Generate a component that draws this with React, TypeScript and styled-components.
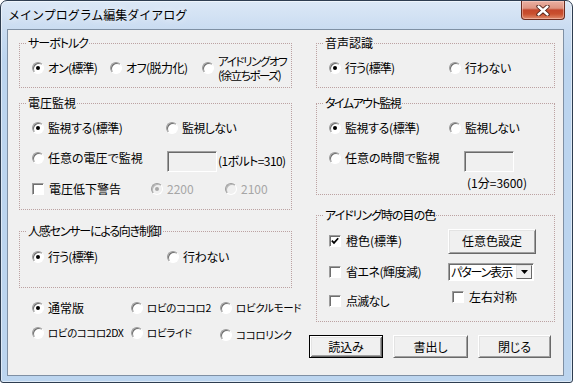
import React from "react";
import styled, { createGlobalStyle } from "styled-components";

const Global = createGlobalStyle`
  html, body { margin: 0; padding: 0; background: #ffffff; }
  body {
    font-family: "Noto Sans CJK JP", "Noto Sans", sans-serif;
    font-size: 12px;
    color: #000;
  }
  * { box-sizing: border-box; }
`;

const Window = styled.div`
  width: 573px;
  height: 383px;
  border: 1px solid #2e3d50;
  border-radius: 7px 7px 3px 3px;
  background: linear-gradient(180deg, #dce8f6 0px, #cadcf1 28px, #bcd5ef 60px, #bcd5ef 100%);
  box-shadow: inset 0 0 0 1px rgba(255, 255, 255, 0.5);
  padding: 0 8px 6px 6px;
  display: flex;
  flex-direction: column;
`;

const TitleBar = styled.div`
  height: 28px;
  flex: none;
  display: flex;
  align-items: flex-start;
  justify-content: space-between;
`;

const TitleText = styled.div`
  font-size: 12px;
  line-height: 28px;
  padding-left: 1px;
  white-space: nowrap;
  color: #000;
  text-shadow: 0 0 6px rgba(255, 255, 255, 0.9);
`;

const CloseButton = styled.div`
  width: 44px;
  height: 19px;
  margin-right: -1px;
  border: 1px solid #6a2c20;
  border-top: none;
  border-radius: 0 0 4px 4px;
  background: linear-gradient(
    180deg,
    #eab0a2 0%,
    #de9482 40%,
    #c4472c 50%,
    #c9502f 72%,
    #e08a6c 100%
  );
  box-shadow: inset 0 0 0 1px rgba(255, 220, 210, 0.45);
  display: flex;
  align-items: center;
  justify-content: center;
`;

const Client = styled.div`
  flex: 1;
  border: 1px solid #7f90a4;
  background: #f0f0f0;
  display: flex;
  gap: 24px;
  padding: 13px 0 0 11px;
  font-feature-settings: "palt";
`;

const Column = styled.div<{ $w: number }>`
  width: ${(p) => p.$w}px;
  display: flex;
  flex-direction: column;
`;

const Group = styled.div<{ $h: number; $mt?: number; $pt?: number; $pl?: number }>`
  position: relative;
  height: ${(p) => p.$h}px;
  margin-top: ${(p) => p.$mt ?? 0}px;
  padding: ${(p) => p.$pt ?? 10}px 0 0 ${(p) => p.$pl ?? 12}px;
  border: 1px dotted #bca2a2;
  flex: none;
`;

const Legend = styled.span<{ $ls?: number }>`
  position: absolute;
  top: -8px;
  left: 7px;
  padding: 0 1px;
  line-height: 14px;
  letter-spacing: ${(p) => p.$ls ?? 0}px;
  background: #f0f0f0;
  white-space: nowrap;
`;

const Line = styled.div<{ $cols: string; $h: number; $pl?: number }>`
  display: grid;
  grid-template-columns: ${(p) => p.$cols};
  align-items: center;
  height: ${(p) => p.$h}px;
  padding-left: ${(p) => p.$pl ?? 0}px;
`;

const Item = styled.span<{ $gap?: number; $dy?: number }>`
  display: inline-flex;
  align-items: center;
  gap: ${(p) => p.$gap ?? 4}px;
  margin-top: ${(p) => ((p.$dy ?? 0) > 0 ? (p.$dy ?? 0) * 2 : 0)}px;
  margin-bottom: ${(p) => ((p.$dy ?? 0) < 0 ? -(p.$dy ?? 0) * 2 : 0)}px;
  white-space: nowrap;
`;

const Label = styled.span<{ $disabled?: boolean; $ls?: number; $fs?: number }>`
  line-height: 14px;
  font-size: ${(p) => p.$fs ?? 12}px;
  letter-spacing: ${(p) => p.$ls ?? 0}px;
  color: ${(p) => (p.$disabled ? "#a6a6a6" : "#000")};
`;

const RadioMark = styled.span<{ $on?: boolean; $disabled?: boolean }>`
  flex: none;
  width: 12px;
  height: 12px;
  border-radius: 50%;
  border: 1px solid;
  border-color: #9c9c9c #ffffff #ffffff #9c9c9c;
  box-shadow: inset 1px 1px 0 ${(p) => (p.$disabled ? "#b8b8b8" : "#6e6e6e")};
  background: ${(p) => (p.$disabled ? "#f0f0f0" : "#fff")};
  display: grid;
  place-items: center;
  &::after {
    content: "";
    width: 4px;
    height: 4px;
    border-radius: 50%;
    background: ${(p) => (p.$on ? (p.$disabled ? "#a8a8a8" : "#000") : "transparent")};
  }
`;

const CheckMark = styled.span`
  flex: none;
  width: 12px;
  height: 12px;
  border: 1px solid;
  border-color: #9c9c9c #ffffff #ffffff #9c9c9c;
  box-shadow: inset 1px 1px 0 #6e6e6e;
  background: #fff;
  display: grid;
  place-items: center;
`;

const TextBox = styled.span<{ $dy?: number }>`
  display: block;
  width: 50px;
  height: 21px;
  margin-top: ${(p) => (p.$dy ?? 0) * 2}px;
  border: 1px solid;
  border-color: #a0a0a0 #ffffff #ffffff #a0a0a0;
  box-shadow: inset 1px 1px 0 #6a6a6a;
  background: #f0f0f0;
`;

const Note = styled.span<{ $dy?: number; $ls?: number }>`
  line-height: 14px;
  white-space: nowrap;
  letter-spacing: ${(p) => p.$ls ?? 0}px;
  margin-top: ${(p) => (p.$dy ?? 0) * 2}px;
`;

const ModelGrid = styled.div`
  display: grid;
  grid-template-columns: 99px 89px auto;
  grid-auto-rows: 25px;
  align-items: center;
  margin-top: 7px;
  padding-left: 13px;
`;

const PushButton = styled.button<{ $w: number; $h: number; $default?: boolean }>`
  width: ${(p) => p.$w}px;
  height: ${(p) => p.$h}px;
  padding: 0;
  font-family: inherit;
  font-size: 12px;
  font-feature-settings: "palt";
  color: #000;
  background: #f0f0f0;
  border: 1px solid;
  border-color: ${(p) => (p.$default ? "#000 #000 #000 #000" : "#ffffff #696969 #696969 #ffffff")};
  box-shadow: ${(p) =>
    p.$default
      ? "inset 1px 1px 0 #fff, inset -1px -1px 0 #696969, inset 2px 2px 0 #e3e3e3, inset -2px -2px 0 #a0a0a0"
      : "inset 1px 1px 0 #e3e3e3, inset -1px -1px 0 #a0a0a0"};
  border-radius: 0;
  line-height: 14px;
`;

const ButtonRow = styled.div`
  display: flex;
  gap: 10px;
  margin-top: 13px;
  margin-left: -7px;
`;

const Combo = styled.div`
  width: 86px;
  height: 18px;
  border: 1px solid;
  border-color: #a0a0a0 #ffffff #ffffff #a0a0a0;
  box-shadow: inset 1px 1px 0 #6a6a6a;
  background: #fff;
  display: flex;
  align-items: center;
  padding: 1px 1px 1px 2px;
`;

const ComboText = styled.span`
  flex: 1;
  min-width: 0;
  line-height: 14px;
  letter-spacing: -1.1px;
  white-space: nowrap;
`;

const DropButton = styled.span`
  width: 16px;
  height: 14px;
  flex: none;
  background: #f0f0f0;
  border: 1px solid;
  border-color: #e3e3e3 #696969 #696969 #e3e3e3;
  display: grid;
  place-items: center;
`;

type OptProps = {
  on?: boolean;
  disabled?: boolean;
  dy?: number;
  ls?: number;
  fs?: number;
  children: React.ReactNode;
};

function Radio({ on, disabled, dy, ls, fs, children }: OptProps) {
  return (
    <Item $dy={dy}>
      <RadioMark $on={on} $disabled={disabled} />
      <Label $disabled={disabled} $ls={ls} $fs={fs}>
        {children}
      </Label>
    </Item>
  );
}

function Check({ on, dy, ls, fs, children }: OptProps) {
  return (
    <Item $gap={5} $dy={dy}>
      <CheckMark>
        {on && (
          <svg width="8" height="8" viewBox="0 0 8 8">
            <path d="M0.8 3.6 L3 5.9 L7.2 1.3" fill="none" stroke="#000" strokeWidth="1.7" />
          </svg>
        )}
      </CheckMark>
      <Label $ls={ls} $fs={fs}>
        {children}
      </Label>
    </Item>
  );
}

export default function App() {
  return (
    <>
      <Global />
      <Window>
        <TitleBar>
          <TitleText>メインプログラム編集ダイアログ</TitleText>
          <CloseButton>
            <svg width="14" height="11" viewBox="0 0 14 11">
              <path d="M2.5 1.5 L11.5 9.5 M11.5 1.5 L2.5 9.5" stroke="#4a1c14" strokeWidth="4.2" strokeLinecap="round" />
              <path d="M2.5 1.5 L11.5 9.5 M11.5 1.5 L2.5 9.5" stroke="#ffffff" strokeWidth="2.4" strokeLinecap="round" />
            </svg>
          </CloseButton>
        </TitleBar>
        <Client>
          <Column $w={273}>
            <Group $h={45}>
              <Legend $ls={-1}>サーボトルク</Legend>
              <Line $cols="78px 92px auto" $h={28}>
                <Radio on ls={-0.8}>
                  オン(標準)
                </Radio>
                <Radio ls={-0.5}>オフ(脱力化)</Radio>
                <Radio fs={11.5} ls={-1.4}>
                  アイドリングオフ
                  <br />
                  (徐立ちポーズ)
                </Radio>
              </Line>
            </Group>

            <Group $h={107} $mt={15}>
              <Legend>電圧監視</Legend>
              <Line $cols="134px auto" $h={28}>
                <Radio on ls={-0.4}>
                  監視する(標準)
                </Radio>
                <Radio ls={-0.6}>監視しない</Radio>
              </Line>
              <Line $cols="135px 51px auto" $h={32}>
                <Radio>任意の電圧で監視</Radio>
                <TextBox $dy={3} />
                <Note $dy={3} $ls={-0.6}>
                  (1ボルト=310)
                </Note>
              </Line>
              <Line $cols="119px 74px auto" $h={30}>
                <Check>電圧低下警告</Check>
                <Radio on disabled>
                  2200
                </Radio>
                <Radio disabled>2100</Radio>
              </Line>
            </Group>

            <Group $h={57} $mt={21} $pt={11}>
              <Legend $ls={-1.2}>人感センサーによる向き制御</Legend>
              <Line $cols="135px auto" $h={28}>
                <Radio on ls={-0.8}>
                  行う(標準)
                </Radio>
                <Radio ls={-0.3}>行わない</Radio>
              </Line>
            </Group>

            <ModelGrid>
              <Radio on>通常版</Radio>
              <Radio fs={10.5} ls={-0.3}>
                ロビのココロ2
              </Radio>
              <Radio fs={10.5} ls={-0.3}>
                ロビクルモード
              </Radio>
              <Radio fs={10.5} ls={-0.4}>
                ロビのココロ2DX
              </Radio>
              <Radio fs={10.5} ls={-0.3}>
                ロビライド
              </Radio>
              <Radio fs={10.5} ls={-0.3} dy={2}>
                ココロリンク
              </Radio>
            </ModelGrid>
          </Column>

          <Column $w={239}>
            <Group $h={45}>
              <Legend>音声認識</Legend>
              <Line $cols="120px auto" $h={28}>
                <Radio on ls={-0.8}>
                  行う(標準)
                </Radio>
                <Radio ls={-0.3}>行わない</Radio>
              </Line>
            </Group>

            <Group $h={92} $mt={15}>
              <Legend $ls={-1.5}>タイムアウト監視</Legend>
              <Line $cols="120px auto" $h={28}>
                <Radio on ls={-0.4}>
                  監視する(標準)
                </Radio>
                <Radio ls={-0.6}>監視しない</Radio>
              </Line>
              <Line $cols="135px auto" $h={32}>
                <Radio>任意の時間で監視</Radio>
                <TextBox $dy={3} />
              </Line>
              <Line $cols="auto" $h={18} $pl={138}>
                <Note>(1分=3600)</Note>
              </Line>
            </Group>

            <Group $h={107} $mt={20}>
              <Legend $ls={-1}>アイドリング時の目の色</Legend>
              <Line $cols="119px auto" $h={30}>
                <Check on>橙色(標準)</Check>
                <PushButton $w={88} $h={25}>任意色設定</PushButton>
              </Line>
              <Line $cols="119px auto" $h={32}>
                <Check ls={-0.5}>省エネ(輝度減)</Check>
                <Combo>
                  <ComboText>パターン表示</ComboText>
                  <DropButton>
                    <svg width="7" height="4" viewBox="0 0 7 4">
                      <path d="M0 0 L7 0 L3.5 4 Z" fill="#000" />
                    </svg>
                  </DropButton>
                </Combo>
              </Line>
              <Line $cols="123px auto" $h={22}>
                <Check dy={2} ls={-0.8}>
                  点滅なし
                </Check>
                <Check dy={-2}>左右対称</Check>
              </Line>
            </Group>

            <ButtonRow>
              <PushButton $w={74} $h={23} $default>
                読込み
              </PushButton>
              <PushButton $w={75} $h={23}>
                書出し
              </PushButton>
              <PushButton $w={73} $h={23}>
                閉じる
              </PushButton>
            </ButtonRow>
          </Column>
        </Client>
      </Window>
    </>
  );
}
